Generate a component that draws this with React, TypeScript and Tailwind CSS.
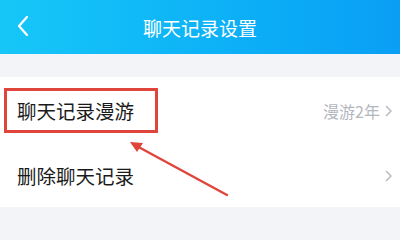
import React from "react";

const font = { fontFamily: '"Noto Sans CJK SC", "Noto Sans", sans-serif' };

function Chevron({ className }: { className?: string }) {
  return (
    <svg width="8" height="12" viewBox="0 0 8 12" className={className}>
      <path d="M1.5 1.5 L6 6 L1.5 10.5" fill="none" stroke="#b9bcc4" strokeWidth="1.6" strokeLinecap="round" strokeLinejoin="round" />
    </svg>
  );
}

export default function App() {
  return (
    <div className="w-[400px] h-[240px] bg-[#f3f4f8] overflow-hidden relative" style={font}>
      <div className="h-[54px] bg-gradient-to-r from-[#17c7f8] to-[#0a9ff5] flex items-center relative">
        <svg width="14" height="22" viewBox="0 0 14 22" className="absolute left-[16px] top-[15px]">
          <path d="M11 2 L3 11 L11 20" fill="none" stroke="white" strokeWidth="2.2" strokeLinecap="round" strokeLinejoin="round" />
        </svg>
        <div className="flex-1 text-center text-white text-[19px] leading-none">聊天记录设置</div>
      </div>
      <div className="mt-[23px] bg-white">
        <div className="h-[65px] flex items-center pl-[17px] pr-[7px] pt-[3px]">
          <span className="text-[19.5px] text-[#1a1a1a] leading-none">聊天记录漫游</span>
          <span className="ml-auto text-[16px] text-[#b3b6bd] leading-none">漫游2年</span>
          <Chevron className="ml-[5px]" />
        </div>
        <div className="h-[65px] flex items-center pl-[17px] pr-[7px] pt-[3px]">
          <span className="text-[19.5px] text-[#1a1a1a] leading-none">删除聊天记录</span>
          <Chevron className="ml-auto" />
        </div>
      </div>
      <div className="absolute left-[4px] top-[88px] w-[154px] h-[45px] border-[3px] border-[#e0453c]" />
      <svg className="absolute left-0 top-0" width="400" height="240" viewBox="0 0 400 240">
        <line x1="227" y1="195" x2="133" y2="144" stroke="#e0453c" strokeWidth="2.5" strokeLinecap="round" />
        <path d="M130 142 L143 143 L137 152 Z" fill="#e0453c" />
      </svg>
    </div>
  );
}
